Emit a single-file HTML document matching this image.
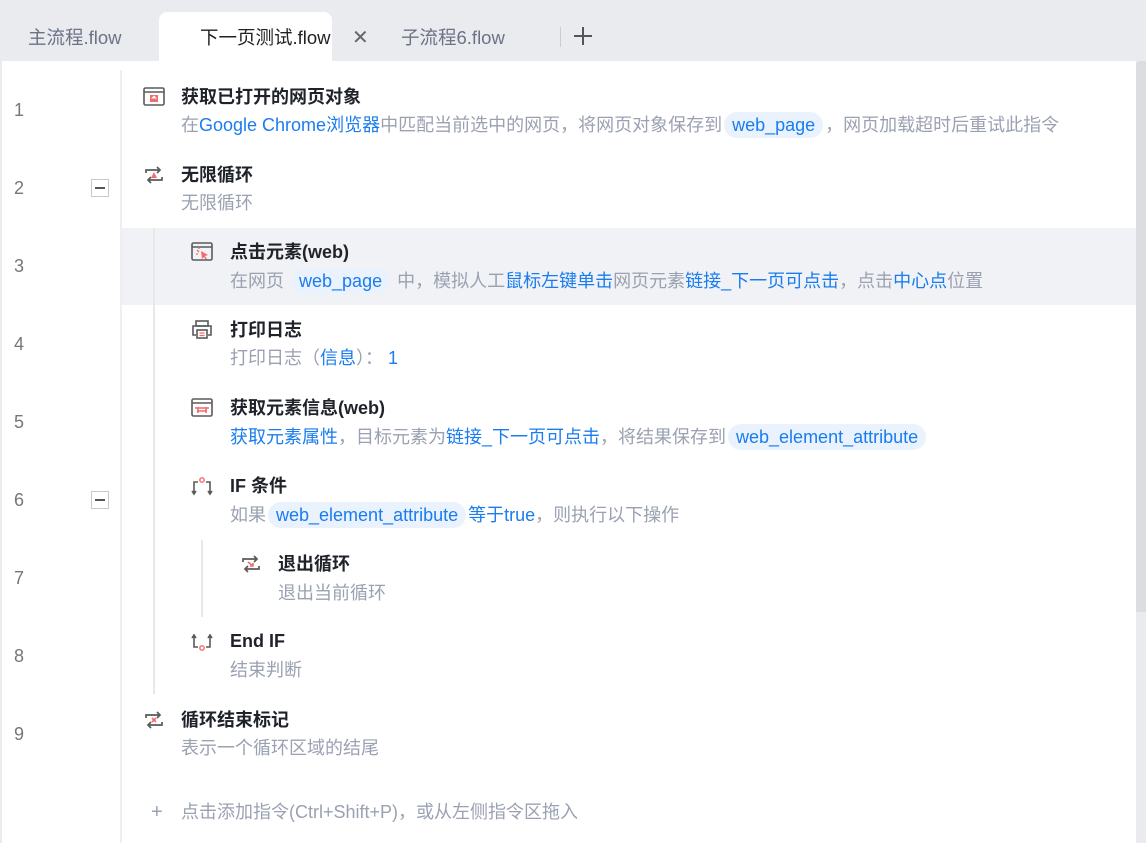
<!DOCTYPE html>
<html><head><meta charset="utf-8"><style>
*{margin:0;padding:0;box-sizing:border-box}
body{width:1146px;height:843px;background:#e9ebef;font-family:"Liberation Sans","Noto Sans CJK SC",sans-serif;position:relative;overflow:hidden}
.a{position:absolute;white-space:nowrap}
.tab{font-size:18.5px;color:#6b7385;line-height:24px}
.main{position:absolute;left:2px;top:61px;width:1134px;height:782px;background:#fff}
.sep{position:absolute;left:120px;top:70px;width:2px;height:773px;background:#efefef}
.num{font-size:18px;color:#777;line-height:24px;left:14px}
.t{font-size:18px;font-weight:bold;color:#1f2329;line-height:24px}
.d{font-size:18px;color:#9aa1b1;line-height:24px}
.b{color:#1a7cf0}
.p{background:#e9f2fd;color:#1a7cf0;border-radius:13px;padding:3px 8px;margin:0 2px}
.ic{position:absolute}
.g{position:absolute;width:2px;background:#e8e8e8}
.box{position:absolute;left:91px;width:18px;height:18px;border:1px solid #c9c9c9;background:#fff}
.box:after{content:"";position:absolute;left:3px;top:7px;width:10px;height:1.5px;background:#555}
</style></head><body>
<div class="a tab" style="left:28px;top:26px">主流程.flow</div>
<div class="a" style="left:159px;top:12px;width:173px;height:50px;background:#fff;border-radius:8px 8px 0 0"></div>
<div class="a tab" style="left:200px;top:26px;color:#222">下一页测试.flow</div>
<div class="a" style="left:352px;top:27px;font-size:20px;color:#666;line-height:22px">✕</div>
<div class="a tab" style="left:401px;top:26px">子流程6.flow</div>
<div class="a" style="left:560px;top:27px;width:1px;height:20px;background:#c9ccd2"></div>
<svg class="ic" style="left:573px;top:26px" width="20" height="20"><path d="M10 1V19M1 10H19" stroke="#555" stroke-width="2"/></svg>
<div class="main"></div>
<div class="a" style="left:1136px;top:61px;width:10px;height:551px;background:#dcdde1;border-radius:4px 0 0 0"></div>
<div class="sep"></div>
<div class="a" style="left:122px;top:228px;width:1014px;height:77px;background:#f0f2f5"></div>
<div class="g" style="left:153px;top:228px;height:466px"></div>
<div class="g" style="left:201px;top:540px;height:77px"></div>

<div class="a num" style="top:98px">1</div>
<div class="a num" style="top:176px">2</div>
<div class="a num" style="top:254px">3</div>
<div class="a num" style="top:332px">4</div>
<div class="a num" style="top:410px">5</div>
<div class="a num" style="top:488px">6</div>
<div class="a num" style="top:566px">7</div>
<div class="a num" style="top:644px">8</div>
<div class="a num" style="top:722px">9</div>
<div class="box" style="top:179px"></div>
<div class="box" style="top:491px"></div>

<svg class="ic" style="left:143px;top:87px" width="22" height="20"><rect x="1" y="1" width="20" height="17" rx="1.5" fill="none" stroke="#5a5a5a" stroke-width="1.6"/><line x1="1" y1="5" x2="21" y2="5" stroke="#5a5a5a" stroke-width="1.4"/><rect x="7" y="8" width="8" height="7" fill="#f36b6b"/><path d="M11 8.5l3 3h-6z" fill="#fff"/></svg>
<svg class="ic" style="left:143px;top:165px" width="22" height="20"><path d="M3 8V5H17M14 2l3 3-3 3M19 12v3H5M8 12l-3 3 3 3" fill="none" stroke="#5a5a5a" stroke-width="1.7"/><path d="M11 7l-3 6h6z" fill="#f36b6b"/></svg>
<svg class="ic" style="left:191px;top:242px" width="22" height="20"><rect x="1" y="1" width="20" height="17" rx="1.5" fill="none" stroke="#5a5a5a" stroke-width="1.6"/><line x1="1" y1="5" x2="21" y2="5" stroke="#5a5a5a" stroke-width="1.4"/><path d="M10 9l7 4-3 1 2 3-1 1-2-3-2 2z" fill="#f36b6b"/><path d="M6 8l2 2M5 12h2M8 7v-1" stroke="#f36b6b" stroke-width="1.3"/></svg>
<svg class="ic" style="left:191px;top:320px" width="22" height="20"><rect x="5" y="1" width="12" height="5" fill="none" stroke="#5a5a5a" stroke-width="1.6"/><path d="M5 15H2V6h18v9h-3" fill="none" stroke="#5a5a5a" stroke-width="1.6"/><rect x="6" y="10" width="10" height="8" fill="#fff" stroke="#5a5a5a" stroke-width="1.6"/><path d="M8.5 13h5M8.5 15.5h5" stroke="#f36b6b" stroke-width="1.3"/></svg>
<svg class="ic" style="left:191px;top:398px" width="22" height="20"><rect x="1" y="1" width="20" height="17" rx="1.5" fill="none" stroke="#5a5a5a" stroke-width="1.6"/><line x1="1" y1="5" x2="21" y2="5" stroke="#5a5a5a" stroke-width="1.4"/><path d="M4 10h14M6 13h10M7 9v6M15 9v6" stroke="#f36b6b" stroke-width="1.6"/></svg>
<svg class="ic" style="left:191px;top:476px" width="22" height="22"><path d="M3 18V6h4M19 18V6h-4M1 15l2 3 2-3M17 15l2 3 2-3" fill="none" stroke="#5a5a5a" stroke-width="1.6"/><circle cx="11" cy="4" r="2.2" fill="#fff" stroke="#f36b6b" stroke-width="1.4"/></svg>
<svg class="ic" style="left:240px;top:554px" width="22" height="20"><path d="M3 8V5H17M14 2l3 3-3 3M19 12v3H5M8 12l-3 3 3 3" fill="none" stroke="#5a5a5a" stroke-width="1.7"/><path d="M8 8l5 4M13 9v3h-3" fill="none" stroke="#f36b6b" stroke-width="1.6"/></svg>
<svg class="ic" style="left:191px;top:631px" width="22" height="22"><path d="M3 4v12h4M19 4v12h-4M1 7l2-3 2 3M17 7l2-3 2 3" fill="none" stroke="#5a5a5a" stroke-width="1.6"/><circle cx="11" cy="17" r="2.2" fill="#fff" stroke="#f36b6b" stroke-width="1.4"/></svg>
<svg class="ic" style="left:143px;top:710px" width="22" height="20"><path d="M3 8V5H17M14 2l3 3-3 3M19 12v3H5M8 12l-3 3 3 3" fill="none" stroke="#5a5a5a" stroke-width="1.7"/><path d="M9 8l4 4M13 8l-4 4" stroke="#f36b6b" stroke-width="1.6"/></svg>

<div class="a t" style="left:181px;top:85px">获取已打开的网页对象</div>
<div class="a d" style="left:181px;top:113px">在<span class="b">Google Chrome浏览器</span>中匹配当前选中的网页，将网页对象保存到<span class="p">web_page</span>，网页加载超时后重试此指令</div>
<div class="a t" style="left:181px;top:163px">无限循环</div>
<div class="a d" style="left:181px;top:191px">无限循环</div>
<div class="a t" style="left:230px;top:240px">点击元素(web)</div>
<div class="a d" style="left:230px;top:269px">在网页 <span class="p">web_page</span> 中，模拟人工<span class="b">鼠标左键单击</span>网页元素<span class="b">链接_下一页可点击</span>，点击<span class="b">中心点</span>位置</div>
<div class="a t" style="left:230px;top:318px">打印日志</div>
<div class="a d" style="left:230px;top:346px">打印日志（<span class="b">信息</span>）： <span class="b">1</span></div>
<div class="a t" style="left:230px;top:396px">获取元素信息(web)</div>
<div class="a d" style="left:230px;top:425px"><span class="b">获取元素属性</span>，目标元素为<span class="b">链接_下一页可点击</span>，将结果保存到<span class="p">web_element_attribute</span></div>
<div class="a t" style="left:230px;top:474px">IF 条件</div>
<div class="a d" style="left:230px;top:503px">如果<span class="p">web_element_attribute</span><span class="b">等于true</span>，则执行以下操作</div>
<div class="a t" style="left:278px;top:552px">退出循环</div>
<div class="a d" style="left:278px;top:581px">退出当前循环</div>
<div class="a t" style="left:230px;top:629px">End IF</div>
<div class="a d" style="left:230px;top:658px">结束判断</div>
<div class="a t" style="left:181px;top:708px">循环结束标记</div>
<div class="a d" style="left:181px;top:736px">表示一个循环区域的结尾</div>
<div class="a d" style="left:151px;top:800px;font-size:20px;line-height:24px">+</div>
<div class="a d" style="left:181px;top:800px">点击添加指令(Ctrl+Shift+P)，或从左侧指令区拖入</div>
</body></html>
